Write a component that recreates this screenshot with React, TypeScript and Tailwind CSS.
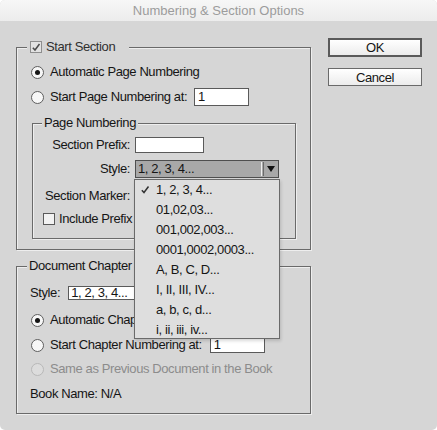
import React from "react";

// 다이얼로그 전체에서 쓰는 글꼴
const font = "font-['Liberation_Sans',Arial,sans-serif]";

// 라디오 버튼
const Radio = ({ checked, disabled }: { checked?: boolean; disabled?: boolean }) => (
    <span
        className={`flex h-[13px] w-[13px] shrink-0 items-center justify-center rounded-full border ${
            disabled ? "border-[#b8b8b8] bg-[#dcdcdc]" : "border-[#5e5e5e] bg-[#f7f7f7]"
        }`}
    >
        {checked && <span className="h-[5px] w-[5px] rounded-full bg-[#151515]" />}
    </span>
);

// 체크 표시
const Check = ({ className }: { className: string }) => (
    <svg viewBox="0 0 12 12" className={className}>
        <path d="M2.2 6.2 L4.8 9 L10.2 1.8" fill="none" stroke="currentColor" strokeWidth="1.8" />
    </svg>
);

const menuItems = [
    "1, 2, 3, 4...",
    "01,02,03...",
    "001,002,003...",
    "0001,0002,0003...",
    "A, B, C, D...",
    "I, II, III, IV...",
    "a, b, c, d...",
    "i, ii, iii, iv...",
];

// 그룹 상자 테두리 (어두운 선 + 밝은 하이라이트)
const groupBox =
    "border border-[#6a6a6a] shadow-[1px_1px_0_#eeeeee,inset_1px_1px_0_#eeeeee]";

export default function App() {
    return (
        <div className={`h-[430px] w-[437px] bg-white text-[13px] text-[#151515] ${font}`}>
            <div className="flex h-full flex-col overflow-hidden rounded-[5px] bg-[#d6d6d6]">
                {/* 제목 표시줄 */}
                <div className="flex h-[21px] items-center justify-center bg-gradient-to-b from-[#f7f7f7] to-[#ececec] text-[13px] text-[#9c9c9c]">
                    Numbering &amp; Section Options
                </div>

                <div className="flex tracking-[-0.4px]">
                    {/* 왼쪽 영역 */}
                    <div className="pl-[16px] pt-[19px]">
                        {/* Start Section 그룹 */}
                        <fieldset className={`w-[295px] ${groupBox}`}>
                            <legend className="ml-[10px] bg-[#d6d6d6] pl-[3px] pr-[14px]">
                                <div className="flex h-[14px] items-center gap-[4px] text-[#303030]">
                                    <span className="flex h-[12px] w-[12px] items-center justify-center border border-[#8e8e8e] bg-[#e2e2e2] text-[#4a4a4a]">
                                        <Check className="h-[11px] w-[11px]" />
                                    </span>
                                    <span className="leading-[14px]">Start Section</span>
                                </div>
                            </legend>

                            <div className="flex flex-col pb-[10px] pl-[14px] pr-[14px]">
                                <div className="mt-[9px] flex h-[18px] items-center gap-[6px]">
                                    <Radio checked />
                                    <span>Automatic Page Numbering</span>
                                </div>
                                <div className="mt-[7px] flex h-[18px] items-center">
                                    <Radio />
                                    <span className="ml-[6px]">Start Page Numbering at:</span>
                                    <span className="ml-[7px] flex h-[18px] w-[55px] items-center border border-[#5a5a5a] bg-white pl-[3px]">
                                        1
                                    </span>
                                </div>

                                {/* Page Numbering 하위 그룹 */}
                                <fieldset className={`ml-[1px] mt-[10px] w-[264px] ${groupBox}`}>
                                    <legend className="ml-[9px] bg-[#d6d6d6] px-[2px]">
                                        <div className="flex h-[14px] items-center leading-[14px]">Page Numbering</div>
                                    </legend>

                                    <div className="flex flex-col pb-[11px] pl-[10px]">
                                        <div className="mt-[7px] flex h-[16px] items-center gap-[5px]">
                                            <span className="w-[87px] whitespace-nowrap text-right">Section Prefix:</span>
                                            <span className="h-[16px] w-[69px] border border-[#5a5a5a] bg-white" />
                                        </div>
                                        <div className="mt-[7px] flex h-[17px] items-center gap-[5px]">
                                            <span className="w-[87px] whitespace-nowrap text-right">Style:</span>
                                            <div className="relative">
                                                <div className="flex h-[18px] w-[144px] items-center border border-[#4e4e4e] bg-[#a8a8a8] pl-[2px]">
                                                    <span className="flex-1 leading-[14px]">1, 2, 3, 4...</span>
                                                    <span className="h-[14px] w-[1px] bg-[#eeeeee]" />
                                                    <span className="ml-[1px] h-[14px] w-[1px] bg-[#6a6a6a]" />
                                                    <svg viewBox="0 0 8 6" className="ml-[3px] mr-[3px] h-[6px] w-[8px]">
                                                        <path d="M0 0 L8 0 L4 6 Z" fill="#111" />
                                                    </svg>
                                                </div>

                                                {/* 펼쳐진 드롭다운 메뉴 */}
                                                <div className="absolute left-[-1px] top-[19px] z-10 h-[160px] w-[146px] overflow-hidden border border-[#6a6a6a] bg-[#dedede] shadow-[1px_2px_3px_rgba(0,0,0,0.15)]">
                                                    {menuItems.map((item, i) => (
                                                        <div key={item} className="relative flex h-[20px] items-center pl-[21px]">
                                                            {i === 0 && (
                                                                <Check className="absolute left-[5px] top-[5px] h-[10px] w-[10px] text-[#333]" />
                                                            )}
                                                            {item}
                                                        </div>
                                                    ))}
                                                </div>
                                            </div>
                                        </div>
                                        <div className="mt-[10px] flex h-[17px] items-center gap-[5px]">
                                            <span className="w-[87px] whitespace-nowrap text-right">Section Marker:</span>
                                            <span className="h-[17px] w-[110px] border border-[#5a5a5a] bg-white" />
                                        </div>
                                        <div className="mt-[7px] flex h-[16px] items-center gap-[4px]">
                                            <span className="h-[12px] w-[12px] border border-[#5a5a5a] bg-[#f2f2f2]" />
                                            <span className="whitespace-nowrap">Include Prefix when Numbering Pages</span>
                                        </div>
                                    </div>
                                </fieldset>
                            </div>
                        </fieldset>

                        {/* Document Chapter Numbering 그룹 */}
                        <fieldset className={`mt-[9px] w-[295px] ${groupBox}`}>
                            <legend className="ml-[10px] bg-[#d6d6d6] px-[2px]">
                                <div className="flex h-[14px] items-center leading-[14px]">Document Chapter Numbering</div>
                            </legend>

                            <div className="flex flex-col pb-[10px] pl-[14px]">
                                <div className="mt-[12px] flex h-[15px] items-center gap-[8px]">
                                    <span className="-ml-[1px]">Style:</span>
                                    <span className="flex h-[14px] w-[130px] items-center border border-[#5a5a5a] bg-white pl-[2px] leading-[12px]">
                                        1, 2, 3, 4...
                                    </span>
                                </div>
                                <div className="mt-[11px] flex h-[18px] items-center gap-[6px]">
                                    <Radio checked />
                                    <span className="whitespace-nowrap">Automatic Chapter Numbering</span>
                                </div>
                                <div className="mt-[7px] flex h-[18px] items-center">
                                    <Radio />
                                    <span className="ml-[6px]">Start Chapter Numbering at:</span>
                                    <span className="ml-[8px] flex h-[15px] w-[55px] items-center border border-[#5a5a5a] bg-white pl-[3px]">
                                        1
                                    </span>
                                </div>
                                <div className="mt-[6px] flex h-[18px] items-center gap-[6px] text-[#8c8c8c]">
                                    <Radio disabled />
                                    <span>Same as Previous Document in the Book</span>
                                </div>
                                <div className="mt-[7px] flex h-[18px] items-center">
                                    <span className="-ml-[1px]">Book Name: N/A</span>
                                </div>
                            </div>
                        </fieldset>
                    </div>

                    {/* 오른쪽 버튼 영역 */}
                    <div className="ml-[17px] flex flex-col pt-[17px]">
                        <button className="flex h-[19px] w-[94px] items-center justify-center border-2 border-[#5a5a5a] bg-gradient-to-b from-white to-[#ececec] text-[13px] leading-none">
                            OK
                        </button>
                        <button className="mt-[11px] flex h-[18px] w-[94px] items-center justify-center border border-[#6a6a6a] bg-gradient-to-b from-white to-[#ececec] text-[13px] leading-none">
                            Cancel
                        </button>
                    </div>
                </div>
            </div>
        </div>
    );
}
